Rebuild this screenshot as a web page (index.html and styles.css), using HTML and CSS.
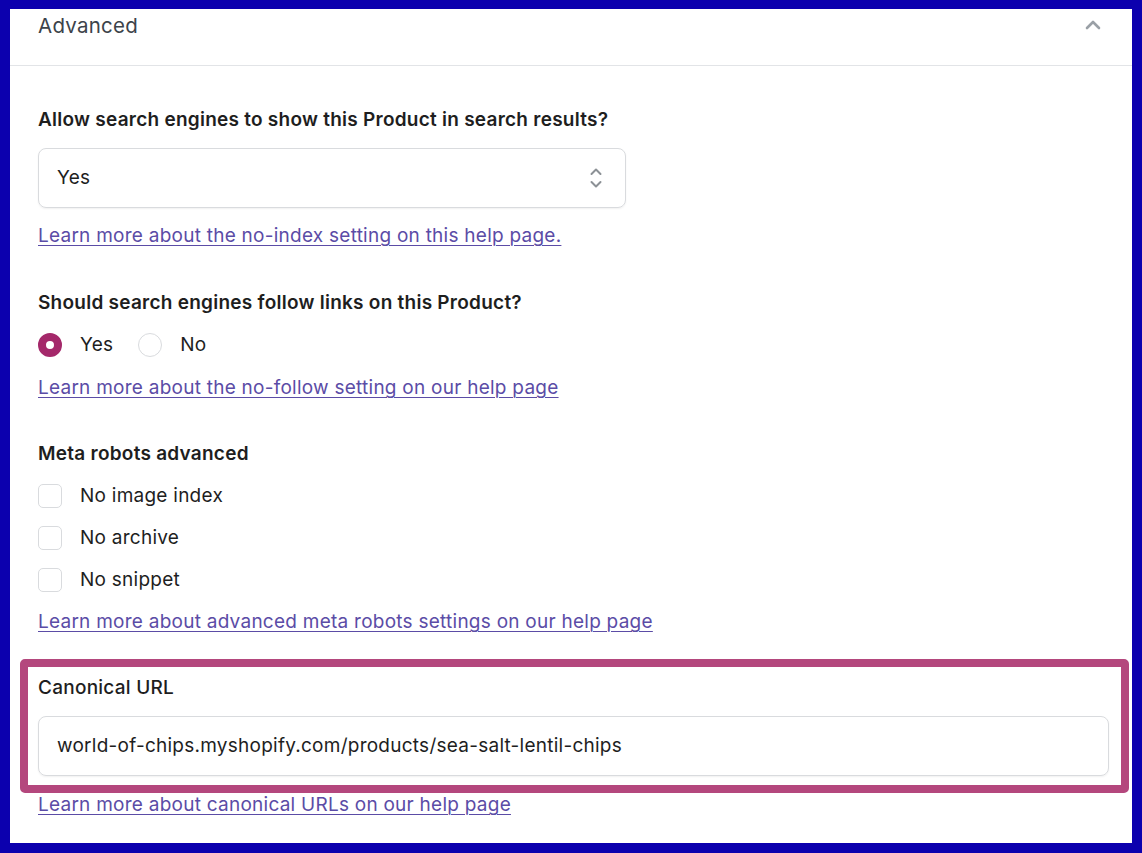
FILE: index.html
```html
<!DOCTYPE html>
<html lang="en">
<head>
    <meta charset="UTF-8">
    <meta name="viewport" content="width=device-width, initial-scale=1.0">
    <title>Advanced settings</title>
    <link rel="stylesheet" href="styles.css">
</head>
<body>
    <div class="panel">
        <div class="panel-header">
            <h2>Advanced</h2>
            <svg class="chevron" width="16" height="10" viewBox="0 0 16 10">
                <path d="M2 8 L8 2 L14 8" fill="none" stroke="#9aa0a6" stroke-width="2.6" stroke-linecap="round" stroke-linejoin="round"/>
            </svg>
        </div>
        <div class="panel-body">
            <!-- No-index -->
            <div class="field field-first">
                <label class="field-label">Allow search engines to show this Product in search results?</label>
                <div class="select">
                    <span>Yes</span>
                    <svg width="14" height="24" viewBox="0 0 14 24">
                        <path d="M2.5 8 L7 3.5 L11.5 8" fill="none" stroke="#8c9196" stroke-width="2" stroke-linecap="round" stroke-linejoin="round"/>
                        <path d="M2.5 16 L7 20.5 L11.5 16" fill="none" stroke="#8c9196" stroke-width="2" stroke-linecap="round" stroke-linejoin="round"/>
                    </svg>
                </div>
                <a href="#" class="help-link">Learn more about the no-index setting on this help page.</a>
            </div>

            <!-- No-follow -->
            <div class="field">
                <label class="field-label">Should search engines follow links on this Product?</label>
                <div class="radio-row">
                    <span class="radio checked"></span><span class="option-text">Yes</span>
                    <span class="radio"></span><span class="option-text">No</span>
                </div>
                <a href="#" class="help-link">Learn more about the no-follow setting on our help page</a>
            </div>

            <!-- Meta robots -->
            <div class="field">
                <label class="field-label">Meta robots advanced</label>
                <div class="check-row"><span class="checkbox"></span><span class="option-text">No image index</span></div>
                <div class="check-row"><span class="checkbox"></span><span class="option-text">No archive</span></div>
                <div class="check-row"><span class="checkbox"></span><span class="option-text">No snippet</span></div>
                <a href="#" class="help-link">Learn more about advanced meta robots settings on our help page</a>
            </div>

            <!-- Canonical -->
            <div class="highlight">
                <label class="field-label canonical-label">Canonical URL</label>
                <div class="text-input">world-of-chips.myshopify.com/products/sea-salt-lentil-chips</div>
            </div>
            <a href="#" class="help-link canonical-link">Learn more about canonical URLs on our help page</a>
        </div>
    </div>
</body>
</html>
```
FILE: styles.css
```css
:root {
    --frame: #0c00ae;
    --text: #1e1e1e;
    --heading: #3c434a;
    --link: #5b4ca6;
    --border: #d9dbde;
    --accent: #a4286a;
    --highlight: #b4477d;
}
html {
    background-color: var(--frame);
}
body {
    margin: 0;
    padding: 9px 10px 10px 10px;
    font-family: Inter, "Noto Sans", sans-serif;
    color: var(--text);
    font-size: 19px;
    line-height: 24px;
    letter-spacing: 0.25px;
}
.panel {
    background-color: #ffffff;
    height: 834px;
    overflow: hidden;
}
.panel-header {
    display: flex;
    justify-content: space-between;
    align-items: flex-start;
    height: 56px;
    padding: 0 31px 0 28px;
    border-bottom: 1px solid #e2e4e7;
}
.panel-header h2 {
    margin: 4px 0 0 0;
    font-size: 20.5px;
    line-height: 26px;
    font-weight: 400;
    color: var(--heading);
}
.chevron {
    margin-top: 11px;
}
.panel-body {
    padding: 42px 23px 0 28px;
}
.field {
    display: flex;
    flex-direction: column;
    align-items: flex-start;
    gap: 18px;
    margin-bottom: 42px;
}
.field-first {
    margin-bottom: 43px;
}
.field-label {
    font-weight: 600;
}
.select {
    box-sizing: border-box;
    width: 588px;
    height: 60px;
    margin-top: -2px;
    margin-bottom: -2px;
    display: flex;
    align-items: center;
    justify-content: space-between;
    padding: 0 22px 0 18px;
    border: 1px solid var(--border);
    border-radius: 8px;
    box-shadow: 0 1px 2px rgba(0, 0, 0, 0.06);
}
.help-link {
    color: var(--link);
    text-decoration: underline;
    text-underline-offset: 3px;
    text-decoration-thickness: 1px;
}
.radio-row {
    margin-bottom: 1px;
}
.radio-row, .check-row {
    display: flex;
    align-items: center;
    height: 24px;
}
.radio {
    box-sizing: border-box;
    width: 24px;
    height: 24px;
    border-radius: 50%;
    border: 1px solid var(--border);
}
.radio.checked {
    border: 8px solid var(--accent);
}
.option-text {
    margin-left: 18px;
    margin-right: 25px;
}
.checkbox {
    box-sizing: border-box;
    width: 24px;
    height: 24px;
    border-radius: 5px;
    border: 1px solid var(--border);
}
.highlight {
    margin: -17px -20px 0 -18px;
    padding: 9px 12px 9px 10px;
    border: 8px solid var(--highlight);
    border-radius: 5px;
    display: flex;
    flex-direction: column;
    gap: 16px;
}
.canonical-label {
    font-weight: 500;
}
.text-input {
    box-sizing: border-box;
    height: 60px;
    display: flex;
    align-items: center;
    padding: 0 18px;
    border: 1px solid var(--border);
    border-radius: 8px;
    box-shadow: 0 1px 2px rgba(0, 0, 0, 0.06);
}
.canonical-link {
    display: inline-block;
    margin-top: -1px;
}
```
